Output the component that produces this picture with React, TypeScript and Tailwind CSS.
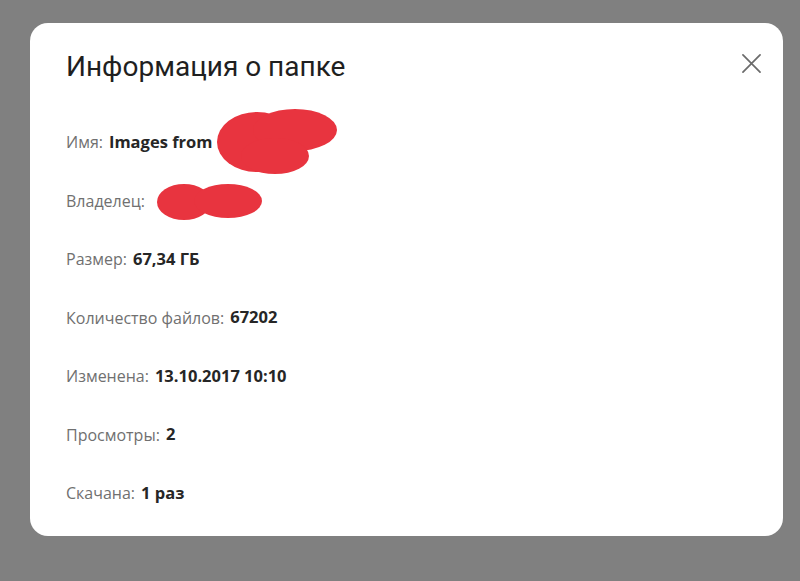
const rows: { label: string; value?: string; blot?: "name" | "owner" }[] = [
  { label: "Имя:", value: "Images from", blot: "name" },
  { label: "Владелец:", blot: "owner" },
  { label: "Размер:", value: "67,34 ГБ" },
  { label: "Количество файлов:", value: "67202" },
  { label: "Изменена:", value: "13.10.2017 10:10" },
  { label: "Просмотры:", value: "2" },
  { label: "Скачана:", value: "1 раз" },
];

function Blot({ kind }: { kind: "name" | "owner" }) {
  if (kind === "name") {
    return (
      <svg width="124" height="70" viewBox="0 0 124 70" className="absolute left-[0px] top-[-36px]">
        <g fill="#e8343f">
          <ellipse cx="42" cy="36" rx="40" ry="30" />
          <ellipse cx="80" cy="24" rx="42" ry="21" />
          <ellipse cx="60" cy="50" rx="34" ry="18" />
        </g>
      </svg>
    );
  }
  return (
    <svg width="108" height="40" viewBox="0 0 108 40" className="absolute left-[8px] top-[-19px]">
      <g fill="#e8343f">
        <ellipse cx="28" cy="20" rx="27" ry="18" />
        <ellipse cx="72" cy="19" rx="34" ry="17" />
      </g>
    </svg>
  );
}

export default function App() {
  return (
    <div className="h-[581px] w-[800px] bg-[#808080] pl-[30px] pt-[23px] font-['Open_Sans','Liberation_Sans',sans-serif]">
      <div className="relative h-[513px] w-[753px] rounded-[18px] bg-white pl-[36px] pt-[26px]">
        <h1 className="h-[36px] text-[28px] leading-[36px] text-[#1f1f1f] font-['Roboto','Liberation_Sans',sans-serif]">
          Информация о папке
        </h1>
        <button
          type="button"
          className="absolute right-[14px] top-[22px] flex h-[36px] w-[36px] items-center justify-center text-[#6b6b6b]"
        >
          <svg width="19" height="19" viewBox="0 0 20 20" fill="none" stroke="currentColor" strokeWidth="1.8" strokeLinecap="round">
            <path d="M1 1 19 19M19 1 1 19" />
          </svg>
        </button>
        <div className="mt-[28px] flex flex-col">
          {rows.map((r) => (
            <div key={r.label} className="flex h-[58.5px] items-center text-[16px]">
              <span className="text-[#707070]">{r.label}</span>
              {r.value && <span className="ml-[6px] text-[16.5px] font-bold text-[#262626]">{r.value}</span>}
              {r.blot && (
                <span className="relative ml-[3px] h-0 w-0">
                  <Blot kind={r.blot} />
                </span>
              )}
            </div>
          ))}
        </div>
      </div>
    </div>
  );
}
